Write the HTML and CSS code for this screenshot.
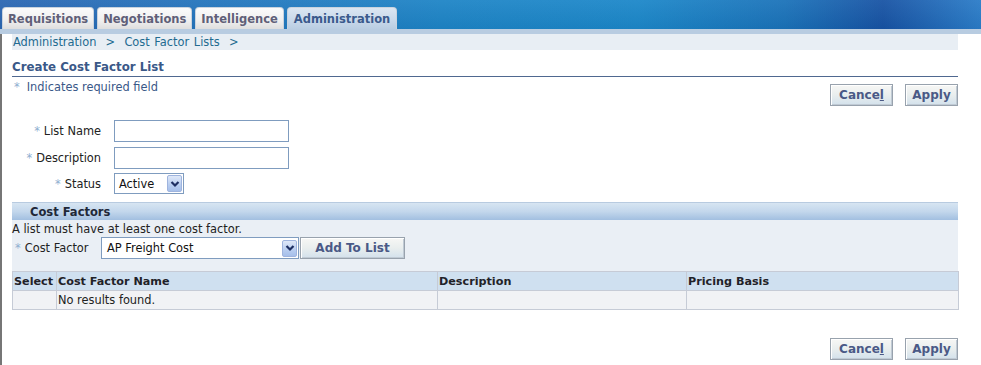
FILE: index.html
```html
<!DOCTYPE html>
<html>
<head>
<meta charset="utf-8">
<link rel="stylesheet" href="styles.css">
</head>
<body>
<div class="banner">
  <div class="tabs">
    <div class="tab">Requisitions</div>
    <div class="tab">Negotiations</div>
    <div class="tab">Intelligence</div>
    <div class="tab active">Administration</div>
  </div>
</div>
<div class="strip"></div>
<div class="main">
  <div class="crumbs">Administration&nbsp;&nbsp;&gt;&nbsp;&nbsp;Cost Factor Lists&nbsp;&nbsp;&gt;</div>
  <div class="heading">Create Cost Factor List</div>
  <div class="toprow">
    <div class="req"><span class="ast">*</span>Indicates required field</div>
    <div class="btns">
      <button class="btn cancel">Cance<u>l</u></button>
      <button class="btn apply">Apply</button>
    </div>
  </div>
  <div class="form">
    <div class="lbl"><span class="ast">*</span>List Name</div>
    <input class="txt" type="text">
    <div class="lbl"><span class="ast">*</span>Description</div>
    <input class="txt" type="text">
    <div class="lbl"><span class="ast">*</span>Status</div>
    <div class="sel status"><span class="seltext">Active</span><span class="dd"><svg width="10" height="8" viewBox="0 0 10 8"><path d="M1.5 2 L5 5.5 L8.5 2" fill="none" stroke="#1d2e62" stroke-width="2.2"/></svg></span></div>
  </div>
  <div class="sectionhead">Cost Factors</div>
  <div class="section">
    <div class="note">A list must have at least one cost factor.</div>
    <div class="cfrow">
      <div class="cflbl"><span class="ast">*</span>Cost Factor</div>
      <div class="sel cf"><span class="seltext">AP Freight Cost</span><span class="dd"><svg width="10" height="8" viewBox="0 0 10 8"><path d="M1.5 2 L5 5.5 L8.5 2" fill="none" stroke="#1d2e62" stroke-width="2.2"/></svg></span></div>
      <button class="btn add">Add To List</button>
    </div>
  </div>
  <table class="grid">
    <colgroup>
      <col class="c1"><col class="c2"><col class="c3"><col class="c4">
    </colgroup>
    <thead>
      <tr><th>Select</th><th>Cost Factor Name</th><th>Description</th><th>Pricing Basis</th></tr>
    </thead>
    <tbody>
      <tr><td></td><td>No results found.</td><td></td><td></td></tr>
    </tbody>
  </table>
  <div class="btns bottom">
    <button class="btn cancel">Cance<u>l</u></button>
    <button class="btn apply">Apply</button>
  </div>
</div>
</body>
</html>
```

FILE: styles.css
```css
* { box-sizing: border-box; }
html, body { margin: 0; padding: 0; background: #fff; }
body {
  font-family: "DejaVu Sans", Verdana, sans-serif;
  font-size: 11.4px;
  color: #222;
  width: 981px;
  height: 365px;
  overflow: hidden;
}
.banner {
  height: 29px;
  background:
    linear-gradient(180deg, rgba(255,255,255,0.06), rgba(0,0,0,0.04)),
    linear-gradient(90deg, #2a66b2 0%, #2474bc 20%, #1d84c6 45%, #1b87c9 65%, #1a72b9 80%, #1753a4 90%, #2a7cc8 100%);
  display: flex;
  align-items: flex-end;
}
.tabs {
  display: flex;
  gap: 3px;
  padding-left: 2px;
}
.tab {
  height: 22px;
  line-height: 22px;
  padding: 0 5px 0 5px;
  font-size: 11.5px;
  font-weight: bold;
  color: #5f5f78;
  background: linear-gradient(180deg, #fbfbfb 0%, #efefef 60%, #dedede 100%);
  border-radius: 4px 4px 0 0;
  border: 1px solid #c9d3de;
  border-bottom: none;
}
.tab.active {
  color: #3a5a8c;
  background: linear-gradient(180deg, #dbe6f2 0%, #c8d8ea 60%, #b9cde2 100%);
  padding: 0 6px 0 6px;
}
.strip {
  height: 5px;
  background: #b8cce1;
}
.main {
  border-left: 2px solid #767676;
  padding: 0 23px 0 10px;
  height: 331px;
}
.crumbs {
  height: 16px;
  line-height: 16px;
  background: #e8eef4;
  color: #236b90;
  padding-left: 1px;
  word-spacing: 1px;
}
.heading {
  margin-top: 9px;
  height: 18px;
  line-height: 17px;
  font-size: 11.8px;
  font-weight: bold;
  color: #3a5888;
  border-bottom: 1px solid #4f6890;
}
.toprow {
  display: flex;
  justify-content: space-between;
  align-items: flex-start;
}
.req {
  margin-top: 2px;
  line-height: 16px;
  color: #3a5888;
  padding-left: 2px;
}
.ast { color: #8eaed0; margin-right: 4px; }
.req .ast { margin-right: 7px; }
.btns {
  display: flex;
  gap: 12px;
  margin-top: 7px;
}
.btn {
  font-family: "DejaVu Sans", Verdana, sans-serif;
  height: 22px;
  font-size: 12px;
  font-weight: bold;
  color: #4a5986;
  background: linear-gradient(180deg, #f7f7f5 0%, #e9eeee 50%, #d3e1ec 100%);
  border: 1px solid #98a2ad;
  box-shadow: inset 1px 1px 0 #ffffff, inset -1px -1px 0 #c0cad4;
  padding: 0;
  cursor: pointer;
}
.btn u { text-decoration: underline; }
.cancel { width: 63px; }
.apply { width: 53px; }
.form {
  margin-top: 14px;
  display: grid;
  grid-template-columns: 89px 175px;
  column-gap: 13px;
  row-gap: 5px;
  align-items: center;
}
.lbl {
  text-align: right;
  color: #222;
}
.txt {
  height: 22px;
  width: 175px;
  border: 1px solid #7f9cbf;
  background: #fff;
  margin: 0;
}
.sel {
  height: 22px;
  border: 1px solid #7f9cbf;
  background: #fff;
  display: flex;
  align-items: center;
  justify-content: space-between;
  padding: 0 1px 0 4px;
  color: #111;
}
.status { width: 70px; height: 21px; margin-top: -1px; }
.seltext { line-height: 16px; }
.dd {
  width: 15px;
  height: 17px;
  border-radius: 2px;
  background: linear-gradient(180deg, #dfe8f8 0%, #b8cdf0 60%, #a6bfea 100%);
  border: 1px solid #9fb4de;
  display: flex;
  align-items: center;
  justify-content: center;
}
.sectionhead {
  margin-top: 8px;
  height: 18px;
  line-height: 18px;
  padding-left: 18px;
  font-size: 11.5px;
  font-weight: bold;
  color: #1f2838;
  background: linear-gradient(180deg, #d7e5f2 0%, #c3d7ec 50%, #a2bfe0 100%);
  border-top: 1px solid #b8cbe0;
}
.section {
  background: #eaeff5;
  height: 51px;
}
.note {
  line-height: 16px;
  padding-top: 1px;
  color: #222;
}
.cfrow {
  display: flex;
  align-items: center;
}
.cflbl {
  width: 89px;
  padding-left: 3px;
  color: #222;
}
.cf { width: 198px; padding-left: 5px; }
.add { width: 105px; margin-left: 1px; }
.grid {
  width: 946px;
  border-collapse: collapse;
  table-layout: fixed;
}
.c1 { width: 44px; }
.c2 { width: 381px; }
.c3 { width: 249px; }
.c4 { width: 272px; }
.grid th {
  height: 19px;
  background: #cfe0f0;
  font-size: 11.2px;
  font-weight: bold;
  color: #1f2228;
  text-align: left;
  padding: 0 1px;
  border: 1px solid #c6cbd6;
  white-space: nowrap;
}
.grid td {
  height: 19px;
  background: #f1f2f5;
  padding: 0 1px;
  border: 1px solid #c6cbd6;
  color: #222;
}
.bottom {
  margin-top: 28px;
  justify-content: flex-end;
}
```
